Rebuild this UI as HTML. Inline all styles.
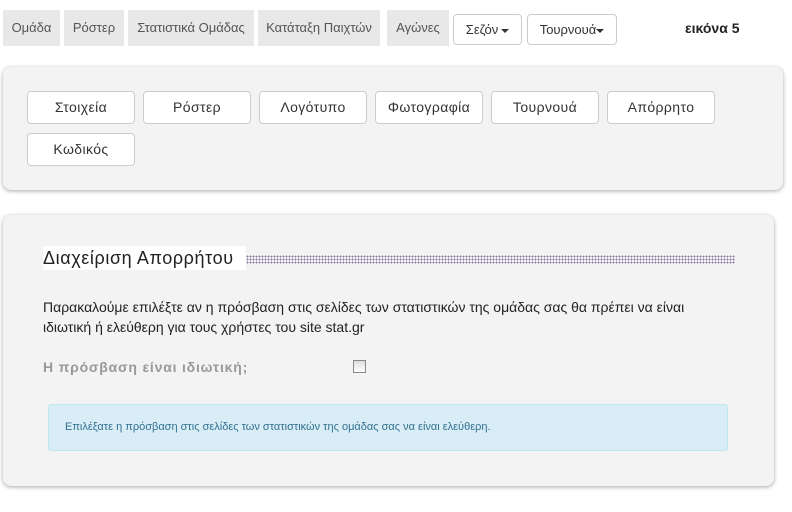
<!DOCTYPE html>
<html><head><meta charset="utf-8"><style>
body{margin:0;width:792px;height:512px;background:#fff;font-family:"Liberation Sans","DejaVu Sans",sans-serif;position:relative;overflow:hidden}
.a{position:absolute;box-sizing:border-box}
.nav{background:#e8e8e8;color:#555;font-size:13px;line-height:36px;text-align:center;top:10px;height:36px}
.dd{background:#fff;border:1px solid #ccc;border-radius:4px;color:#333;font-size:13px;line-height:29px;text-align:center;top:14px;height:31px}
.caret{display:inline-block;width:0;height:0;border-left:4px solid transparent;border-right:4px solid transparent;border-top:4px solid #333;vertical-align:middle;margin-left:3px}
.panel{background:#f3f3f3;border-radius:8px;box-shadow:0 1px 4px rgba(0,0,0,.35)}
.btn{background:#fff;border:1px solid #ccc;border-radius:4px;color:#333;font-size:14px;letter-spacing:0.4px;text-align:center;line-height:31px;height:33px;width:108px}
</style></head><body>
<div class="a nav" style="left:3px;width:57px">Ομάδα</div>
<div class="a nav" style="left:64px;width:60px">Ρόστερ</div>
<div class="a nav" style="left:128px;width:126px">Στατιστικά Ομάδας</div>
<div class="a nav" style="left:258px;width:122px">Κατάταξη Παιχτών</div>
<div class="a nav" style="left:387px;width:62px">Αγώνες</div>
<div class="a dd" style="left:453px;width:69px">Σεζόν<span class="caret"></span></div>
<div class="a dd" style="left:527px;width:90px">Τουρνουά<span class="caret" style="margin-left:0"></span></div>
<div class="a" style="left:685px;top:20px;font-size:14px;font-weight:bold;color:#222">εικόνα 5</div>

<div class="a panel" style="left:3px;top:67px;width:780px;height:123px"></div>
<div class="a btn" style="left:27px;top:91px">Στοιχεία</div>
<div class="a btn" style="left:143px;top:91px">Ρόστερ</div>
<div class="a btn" style="left:259px;top:91px">Λογότυπο</div>
<div class="a btn" style="left:375px;top:91px">Φωτογραφία</div>
<div class="a btn" style="left:491px;top:91px">Τουρνουά</div>
<div class="a btn" style="left:607px;top:91px">Απόρρητο</div>
<div class="a btn" style="left:27px;top:133px">Κωδικός</div>

<div class="a panel" style="left:3px;top:215px;width:771px;height:271px"></div>
<div class="a" style="left:246px;top:255px;width:489px;height:9px;background-image:radial-gradient(circle,#8a7aa0 0.8px,transparent 1px);background-size:3px 3px"></div>
<div class="a" style="left:43px;top:246px;width:203px;height:24px;background:#fff;font-size:18px;letter-spacing:0.6px;line-height:24px;color:#222">Διαχείριση Απορρήτου</div>
<div class="a" style="left:43px;top:297px;width:692px;font-size:14px;line-height:20px;color:#222">Παρακαλούμε επιλέξτε αν η πρόσβαση στις σελίδες των στατιστικών της ομάδας σας θα πρέπει να είναι ιδιωτική ή ελεύθερη για τους χρήστες του site stat.gr</div>
<div class="a" style="left:43px;top:358px;font-size:14px;font-weight:bold;letter-spacing:0.8px;color:#999;line-height:18px">Η πρόσβαση είναι ιδιωτική;</div>
<div class="a" style="left:353px;top:360px;width:13px;height:13px;border:1px solid #888;background:linear-gradient(#ddd,#fff)"></div>
<div class="a" style="left:48px;top:404px;width:680px;height:47px;background:#d9edf7;border:1px solid #bce8f1;border-radius:3px;color:#31708f;font-size:11px;line-height:45px;padding-left:16px">Επιλέξατε η πρόσβαση στις σελίδες των στατιστικών της ομάδας σας να είναι ελεύθερη.</div>
</body></html>
